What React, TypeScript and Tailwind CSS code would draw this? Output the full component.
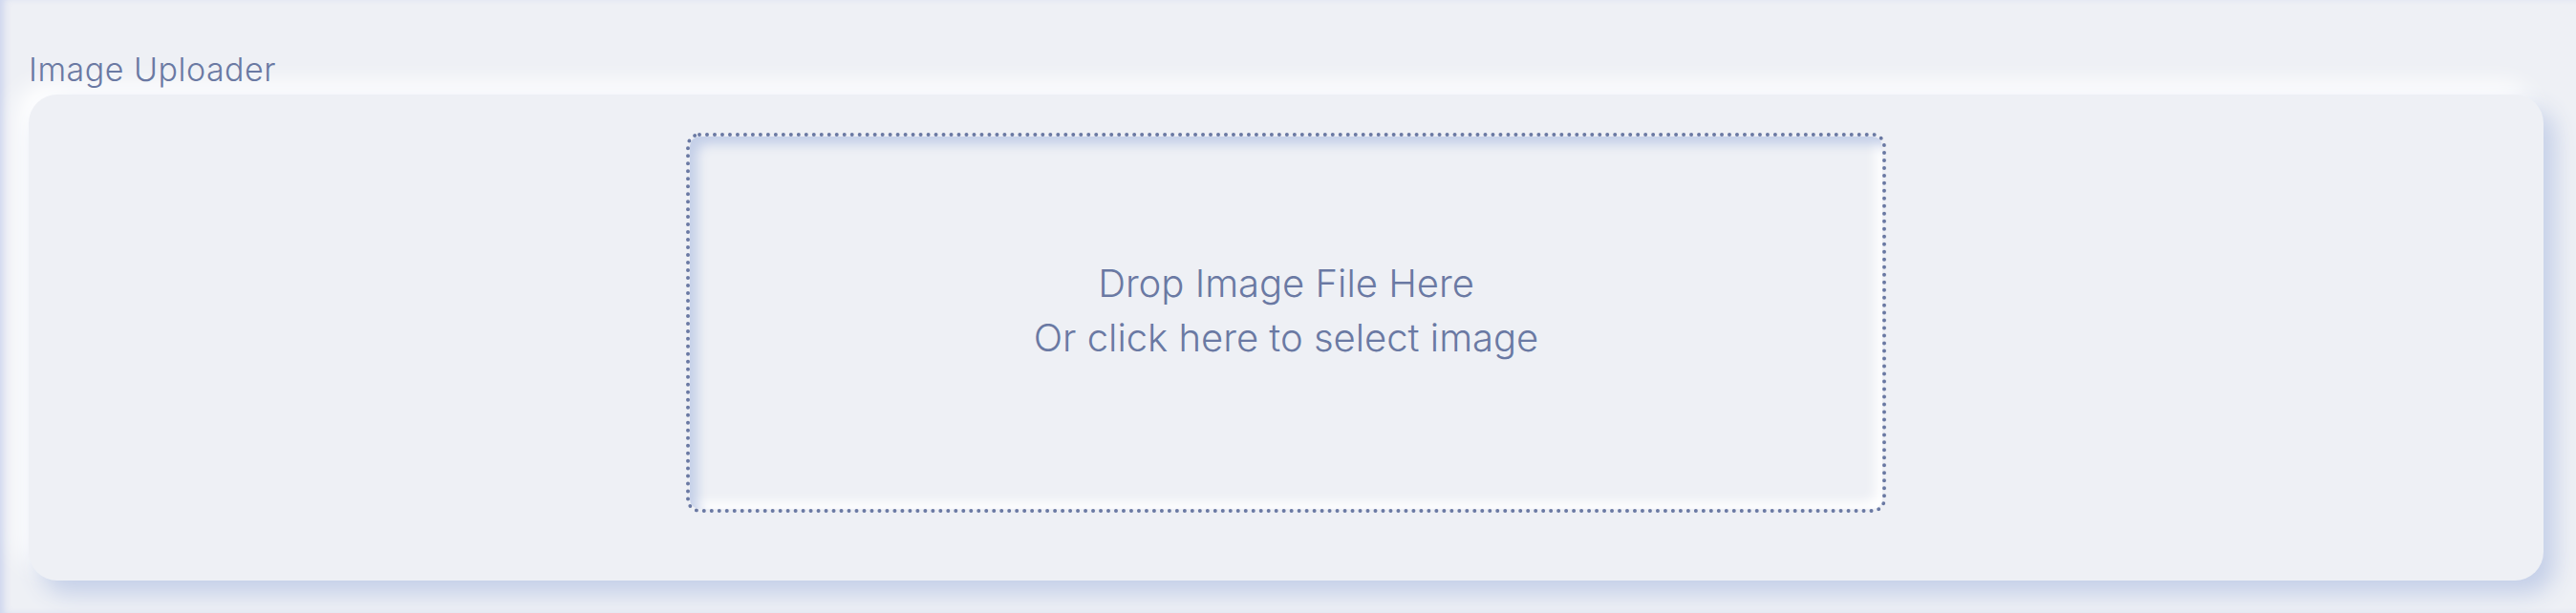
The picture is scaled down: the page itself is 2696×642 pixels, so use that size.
import React from "react";

const TEXT = "text-[#6a79a3]";

const DropZone = () => {
  return (
    <div className="flex h-[398px] w-[1256px] cursor-pointer flex-col items-center justify-center rounded-[14px] border-4 border-dotted border-[#6a79a3] bg-[#eef0f5] pb-[27px] shadow-[inset_8px_8px_12px_#c4cfe8,inset_-7px_-7px_12px_#ffffff]">
      <p className={`text-[40px] font-light leading-[57px] ${TEXT}`}>Drop Image File Here</p>
      <p className={`text-[40px] font-light leading-[57px] ${TEXT}`}>Or click here to select image</p>
    </div>
  );
};

export default function App() {
  return (
    <div
      className="h-[642px] w-full bg-[#eef0f5] pl-[30px] pr-[34px] pt-[53px] shadow-[inset_7px_0_9px_-3px_#cdd5ee]"
      style={{ fontFamily: "Inter, 'Noto Sans', sans-serif" }}
    >
      <label className={`block text-[34px] font-light leading-[40px] tracking-[0.5px] ${TEXT}`}>
        Image Uploader
      </label>
      <div className="mt-[6px] flex h-[509px] justify-center rounded-[30px] bg-[#eef0f5] pt-[40px] shadow-[12px_14px_24px_#c4cfe8,-12px_-12px_24px_#ffffff]">
        <DropZone />
      </div>
    </div>
  );
}
